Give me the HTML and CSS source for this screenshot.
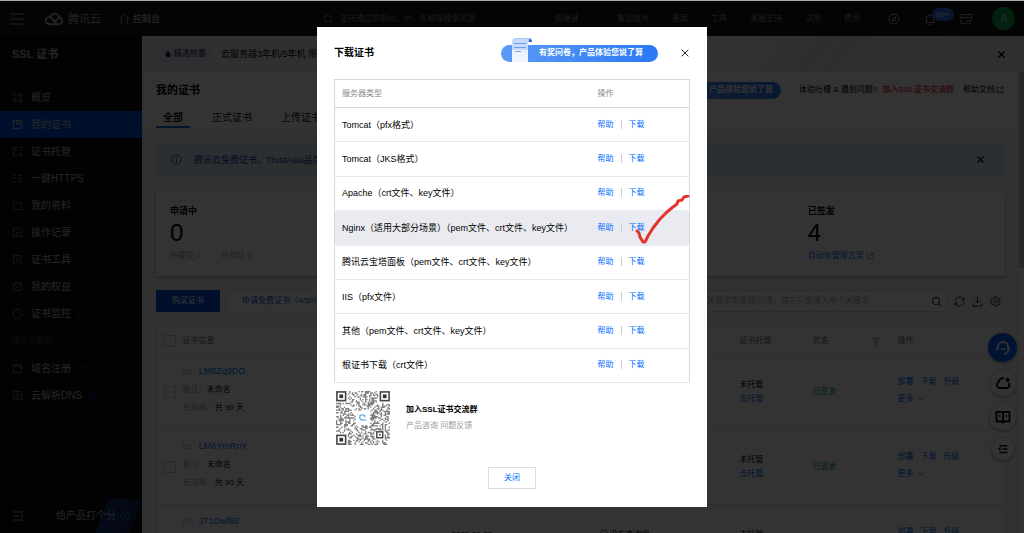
FILE: index.html
```html
<!DOCTYPE html>
<html lang="zh-CN">
<head>
    <meta charset="UTF-8">
    <meta name="viewport" content="width=device-width, initial-scale=1.0">
    <title>SSL 证书 - 控制台</title>
    <link rel="stylesheet" href="styles.css">
</head>
<body>
    <svg class="sprite" aria-hidden="true">
        <symbol id="i-ext" viewBox="0 0 12 12"><path d="M5 2H2v8h8V7M7 1.500h3.500V5M10.500 1.500 5.500 6.500"/></symbol>
        <symbol id="i-search" viewBox="0 0 12 12"><circle cx="5.500" cy="5.500" r="4"/><path d="m8.500 8.500 3 3"/></symbol>
        <symbol id="i-close" viewBox="0 0 12 12"><path d="m2 2 8 8M10 2l-8 8"/></symbol>
        <symbol id="i-down" viewBox="0 0 12 12"><path d="m2 4 4 4 4-4"/></symbol>
        <symbol id="i-info" viewBox="0 0 12 12"><circle cx="6" cy="6" r="5"/><path d="M6 5.500V9M6 3v1.200"/></symbol>
    </svg>

    <header class="topbar">
        <button class="icon-btn menu-btn" aria-label="菜单"><svg viewBox="0 0 14 12"><path d="M0 1h14M0 6h14M0 11h14"/></svg></button>
        <a class="logo" href="#">
            <svg viewBox="0 0 20 14"><path d="M5 12.500a3.800 3.800 0 1 1 1-7.300l7 7.300zM5.500 5.200a5 5 0 0 1 9.700.2 3.700 3.700 0 0 1 .3 7.100H9M9 10.500l4.500-4a3 3 0 0 1 2-1"/></svg>
            <span>腾讯云</span>
        </a>
        <a class="home" href="#">
            <svg viewBox="0 0 12 12"><path d="M1 6 6 1.500 11 6M2.500 5v6h2M9.500 5v6h-2"/></svg>
            <span>控制台</span>
        </a>
        <div class="top-search">
            <svg class="ico"><use href="#i-search"/></svg>
            <input type="text" aria-label="搜索资源" placeholder="支持通过实例ID、IP、名称等搜索资源">
            <span>快捷键 /</span>
        </div>
        <nav class="top-nav">
            <a href="#">集团账号</a>
            <a href="#">备案</a>
            <a href="#">工具</a>
            <a href="#">客服支持</a>
            <a href="#">试用</a>
            <a href="#">费用</a>
        </nav>
        <div class="top-tools">
            <button class="icon-btn" aria-label="导航"><svg viewBox="0 0 12 12"><circle cx="6" cy="6" r="5"/><path d="m4 8 1-3 3-1-1 3z"/></svg></button>
            <button class="icon-btn bell" aria-label="消息"><svg viewBox="0 0 12 12"><path d="M1.500 9.500h9M2.500 9.500V5.500a3.500 3.500 0 0 1 7 0v4M5 11.500h2"/></svg><span class="badge">99+</span></button>
            <button class="icon-btn" aria-label="工单"><svg viewBox="0 0 12 12"><path d="M6 10.500H1v-9h10.500V6M1 4.500h10.500"/><circle cx="9" cy="9" r="2"/></svg></button>
            <button class="avatar">A</button>
        </div>
    </header>

    <div class="layout">
        <aside class="sidebar">
            <h1>SSL 证书</h1>
            <nav class="side-nav">
                <a href="#"><svg viewBox="0 0 12 12"><path d="M1.500 1.500h3v3h-3zM7.500 1.500h3v3h-3zM1.500 7.500h3v3h-3zM7.500 7.500h3v3h-3z"/></svg>概览</a>
                <a href="#" class="active"><svg viewBox="0 0 12 12"><path d="M1.500 1.500h9v9h-9zM5 1.500V6l1.500-1L8 6V1.500"/></svg>我的证书</a>
                <a href="#"><svg viewBox="0 0 12 12"><path d="M5.500 10.500h-4v-9h9v4M4 1.500V5l1.500-1M8 8h3v3H8z"/></svg>证书托管</a>
                <a href="#"><svg viewBox="0 0 12 12"><path d="M1 2.500h3M6 2.500h5M1 6h3M6 6h5M1 9.500h3M6 9.500h5"/></svg>一键HTTPS<svg class="arrow"><use href="#i-down"/></svg></a>
                <a href="#"><svg viewBox="0 0 12 12"><path d="M1.500 10.500v-8H5l1 1h4.500v7z"/></svg>我的资料</a>
                <a href="#"><svg viewBox="0 0 12 12"><path d="M1.500 10.500v-9H8l2.500 2.500v6.500zM4 6h4M4 8h4"/></svg>操作记录</a>
                <a href="#"><svg viewBox="0 0 12 12"><path d="M5 10.500H1.500v-9h9v4M4 4h2"/><circle cx="7.500" cy="7.500" r="2"/><path d="m9 9 2 2"/></svg>证书工具</a>
                <a href="#"><svg viewBox="0 0 12 12"><path d="M1.500 3h9v7.500h-9zM4 1v2M8 1v2M4 6.500h4"/></svg>我的权益</a>
                <a href="#"><svg viewBox="0 0 12 12"><path d="M8.500 1.800A5 5 0 1 0 11 6M6 6.500l4-4"/></svg>证书监控<svg class="ext"><use href="#i-ext"/></svg></a>
                <p>域名与解析</p>
                <a href="#"><svg viewBox="0 0 12 12"><path d="M1.500 2h9v8.500h-9zM1.500 3.500h9"/></svg>域名注册<svg class="ext"><use href="#i-ext"/></svg></a>
                <a href="#"><svg viewBox="0 0 12 12"><path d="M1.500 1.500h9v9h-9zM4 4h4M4 6h4M4 8h4"/></svg>云解析DNS<svg class="ext"><use href="#i-ext"/></svg></a>
            </nav>
            <div class="side-foot">
                <button class="icon-btn" aria-label="收起"><svg viewBox="0 0 12 12"><path d="M1 2h10M1 6h6M1 10h10M9 4.500 11 6 9 7.500"/></svg></button>
                <a href="#">给产品打个分<svg class="ico"><use href="#i-info"/></svg></a>
            </div>
        </aside>

        <main class="main">
            <div class="promo">
                <span class="promo-tag"><svg viewBox="0 0 8 8"><path d="M4 0c.5 2 3 3 3 5a3 3 0 0 1-6 0c0-1.500 2.500-3 3-5z"/></svg>精选特惠</span>
                <a href="#">云服务器3年机/5年机 限</a>
                <svg class="promo-art" viewBox="0 0 170 36"><path d="M0 36 14 20l6 16zM30 36 60 0h24L54 36zM56 36 84 0h26L74 36z"/></svg>
                <button class="icon-btn" aria-label="关闭"><svg class="ico"><use href="#i-close"/></svg></button>
            </div>
            <div class="body-row">
                <div class="page">
                    <div class="page-head">
                        <div class="title-row">
                            <h2>我的证书</h2>
                            <a class="survey survey-small" href="#">有奖问卷，产品体验您说了算</a>
                            <span>体验吐槽 &amp; 遇到问题? <a class="red" href="#">加入SSL证书交流群</a></span>
                            <a class="doc" href="#">帮助文档<svg class="ico"><use href="#i-ext"/></svg></a>
                        </div>
                        <nav class="tabs">
                            <a href="#" class="on">全部</a>
                            <a href="#">正式证书</a>
                            <a href="#">上传证书</a>
                        </nav>
                    </div>
                    <div class="content">
                        <div class="alert">
                            <svg class="ico"><use href="#i-info"/></svg>
                            <span>腾讯云免费证书，TrustAsia品牌</span>
                            <button class="icon-btn" aria-label="关闭"><svg class="ico"><use href="#i-close"/></svg></button>
                        </div>
                        <div class="stats">
                            <div>
                                <h3>申请中</h3>
                                <strong>0</strong>
                                <p><span>待提交 0</span><span>待验证 0</span></p>
                            </div>
                            <div></div>
                            <div></div>
                            <div class="last">
                                <h3>已签发</h3>
                                <strong>4</strong>
                                <p><a href="#">自动化管理方案<svg class="ico"><use href="#i-ext"/></svg></a></p>
                            </div>
                        </div>
                        <div class="toolbar">
                            <button class="btn-primary">购买证书</button>
                            <button class="btn-plain">申请免费证书（4/50）</button>
                            <label class="filter">
                                <input type="text" aria-label="筛选证书" placeholder="支持域名ID搜索，多个关键字用竖线|分隔，其它只能输入单个关键字">
                                <svg class="ico"><use href="#i-search"/></svg>
                            </label>
                            <button class="icon-btn" aria-label="刷新"><svg viewBox="0 0 12 12"><path d="M1 5.500A5 5 0 0 1 10.500 4M11 1.500V4.500H8M11 6.500A5 5 0 0 1 1.500 8M1 10.500V7.500h3"/></svg></button>
                            <button class="icon-btn" aria-label="下载"><svg viewBox="0 0 12 12"><path d="M6 1v6.500M3.500 5 6 7.500 8.500 5M1 8v3h10V8"/></svg></button>
                            <button class="icon-btn" aria-label="设置"><svg viewBox="0 0 12 12"><path d="M4.500 2.500 5 .8h2l.5 1.700 1 .6 1.700-.4 1 1.700L10 5.500v1l1.200 1.200-1 1.700-1.700-.4-1 .6L7 11.200H5l-.5-1.600-1-.6-1.700.4-1-1.700L2 6.500v-1L.8 4.300l1-1.700 1.700.4z"/><circle cx="6" cy="6" r="1.700"/></svg></button>
                        </div>
                        <table class="certs">
                            <thead>
                                <tr>
                                    <th class="c-check"><input type="checkbox" aria-label="全选"></th>
                                    <th class="c-info">证书信息</th>
                                    <th class="c-date"></th>
                                    <th class="c-res"></th>
                                    <th class="c-host">证书托管</th>
                                    <th class="c-state"><span>状态<svg viewBox="0 0 12 12"><path d="M1 1.500h10L7.500 6v5h-3V6z"/></svg></span></th>
                                    <th class="c-op">操作</th>
                                </tr>
                            </thead>
                            <tbody>
                                <tr>
                                    <td><input type="checkbox" aria-label="LM6Zq9DO"></td>
                                    <td class="info"><p><i>ID:</i><a href="#">LM6Zq9DO</a></p><p><i>备注:</i>未命名</p><p><i>有效期:</i>共 90 天</p></td>
                                    <td></td>
                                    <td></td>
                                    <td>未托管<br><a href="#">去托管</a></td>
                                    <td class="ok">已签发</td>
                                    <td class="ops"><a href="#">部署</a><a href="#">下载</a><a href="#">升级</a><br><a href="#">更多<svg class="ico"><use href="#i-down"/></svg></a></td>
                                </tr>
                                <tr>
                                    <td><input type="checkbox" aria-label="LM6YmRnY"></td>
                                    <td class="info"><p><i>ID:</i><a href="#">LM6YmRnY</a></p><p><i>备注:</i>未命名</p><p><i>有效期:</i>共 90 天</p></td>
                                    <td></td>
                                    <td></td>
                                    <td>未托管<br><a href="#">去托管</a></td>
                                    <td class="ok">已签发</td>
                                    <td class="ops"><a href="#">部署</a><a href="#">下载</a><a href="#">升级</a><br><a href="#">更多<svg class="ico"><use href="#i-down"/></svg></a></td>
                                </tr>
                                <tr>
                                    <td><input type="checkbox" aria-label="J71Owf86"></td>
                                    <td class="info"><p><i>ID:</i><a href="#">J71Owf86</a></p><p><i>备注:</i>未命名</p><p><i>有效期:</i>共 90 天</p></td>
                                    <td>2025-01-25<br>&nbsp;</td>
                                    <td><svg class="ico"><use href="#i-info"/></svg> 没有查询呢<br>&nbsp;</td>
                                    <td>未托管<br><a href="#">去托管</a></td>
                                    <td class="ok">已签发</td>
                                    <td class="ops"><a href="#">部署</a><a href="#">下载</a><a href="#">升级</a><br><a href="#">更多<svg class="ico"><use href="#i-down"/></svg></a></td>
                                </tr>
                            </tbody>
                        </table>
                    </div>
                </div>
                <div class="scrollbar"></div>
            </div>
        </main>
    </div>

    <div class="floats">
        <button class="f-blue" aria-label="客服"><svg viewBox="0 0 16 16"><path d="M3 9V7a5 5 0 0 1 10 0v3a4 4 0 0 1-4 4M2 7.500v3M14 7.500v3M6 8.500a2.500 2.500 0 0 0 4 0"/></svg></button>
        <button class="f-mid" aria-label="云助手"><svg viewBox="0 0 16 16"><path d="M9 3.500a4.300 4.300 0 0 0-5.500 3.600A3.200 3.200 0 0 0 4.500 13H11a3 3 0 0 0 2.500-5"/><circle class="dot" cx="12.500" cy="5" r="1"/></svg></button>
        <button class="f-mid" aria-label="文档"><svg viewBox="0 0 16 16"><path d="M1.500 3H7l1 1 1-1h5.500v9.500H9l-1 1-1-1H1.500zM8 4v9M4 7h1.500M10.500 7H12"/></svg></button>
        <button class="f-small" aria-label="收起"><svg viewBox="0 0 16 16"><path d="M3 3.500h11M7 8h7M3 12.500h11M5 6 2.500 8 5 10"/></svg></button>
    </div>

    <div class="mask">
        <section class="dialog" role="dialog" aria-labelledby="dialog-title">
            <header class="dialog-head">
                <h2 id="dialog-title">下载证书</h2>
                <a class="survey" href="#">
                    <svg viewBox="0 0 24 24">
                        <g stroke="none">
                            <path fill="#a9c9fb" d="M3 0h16q2 0 2 4H3z"/>
                            <path fill="#c3dafc" d="M1 2q0-1 2-1h15q-1 0-1 3v9H1z"/>
                            <path fill="#edf4ff" d="M1 12h16v12H1z"/>
                            <path fill="#3565b8" d="M18 1q3 0 3 3h-3z"/>
                        </g>
                        <path stroke="#6ea1f2" d="M3 5.500h12M3 9.500h12M4 13.500h6"/>
                    </svg>
                    有奖问卷，产品体验您说了算
                </a>
                <button class="icon-btn" aria-label="关闭"><svg class="ico"><use href="#i-close"/></svg></button>
            </header>
            <table class="servers">
                <thead>
                    <tr><th>服务器类型</th><th class="act">操作</th></tr>
                </thead>
                <tbody>
                    <tr><td class="name">Tomcat（pfx格式）</td><td><a href="#">帮助</a><a href="#">下载</a></td></tr>
                    <tr><td class="name">Tomcat（JKS格式）</td><td><a href="#">帮助</a><a href="#">下载</a></td></tr>
                    <tr><td class="name">Apache（crt文件、key文件）</td><td><a href="#">帮助</a><a href="#">下载</a></td></tr>
                    <tr class="hover"><td class="name">Nginx（适用大部分场景）（pem文件、crt文件、key文件）</td><td><a href="#">帮助</a><a href="#">下载</a></td></tr>
                    <tr><td class="name">腾讯云宝塔面板（pem文件、crt文件、key文件）</td><td><a href="#">帮助</a><a href="#">下载</a></td></tr>
                    <tr><td class="name">IIS（pfx文件）</td><td><a href="#">帮助</a><a href="#">下载</a></td></tr>
                    <tr><td class="name">其他（pem文件、crt文件、key文件）</td><td><a href="#">帮助</a><a href="#">下载</a></td></tr>
                    <tr><td class="name">根证书下载（crt文件）</td><td><a href="#">帮助</a><a href="#">下载</a></td></tr>
                </tbody>
            </table>
            <div class="group">
                <svg id="qr" viewBox="0 0 41 41" role="img" aria-label="交流群二维码"></svg>
                <div>
                    <h3>加入SSL证书交流群</h3>
                    <p>产品咨询 问题反馈</p>
                </div>
            </div>
            <button class="close-btn">关闭</button>
            <svg class="tick" viewBox="0 0 56 50"><path d="M3 36l2 2 1 4 3 5 2 0 3-6 5-8 7-9 7-7 6-5 4-3 1-3 4-1 2-3 4-1"/></svg>
        </section>
    </div>
    <script src="qr.js"></script>
</body>
</html>
```
FILE: styles.css
```css
* {
    box-sizing: border-box;
}
body {
    margin: 0;
    height: 100vh;
    display: flex;
    flex-direction: column;
    overflow: hidden;
    border-top: 1px solid #a9aba9;
    font: 8px/12px "Liberation Sans", "Noto Sans CJK SC", sans-serif;
    color: #000;
    background: #fff;
}
h1, h2, h3, p {
    margin: 0;
}
a {
    color: #006eff;
    text-decoration: none;
}
input, button {
    font: inherit;
}
svg {
    fill: none;
    stroke: currentColor;
    flex: none;
}
.sprite {
    position: absolute;
    width: 0;
    height: 0;
}
.ico {
    width: 8px;
    height: 8px;
}
.icon-btn {
    display: flex;
    padding: 0;
    border: 0;
    background: none;
    color: inherit;
}
.icon-btn svg {
    width: 12px;
    height: 12px;
}

/* top bar */
.topbar {
    display: flex;
    align-items: center;
    flex: none;
    height: 35px;
    padding: 0 9px 0 10px;
    background: #141414;
    color: #aaa;
}
.topbar a {
    color: inherit;
}
.menu-btn svg {
    width: 14px;
}
.logo {
    display: flex;
    align-items: center;
    gap: 4px;
    margin-left: 21px;
    font-size: 11px;
}
.logo svg {
    width: 19px;
    height: 14px;
    stroke-width: 2;
}
.home {
    display: flex;
    align-items: center;
    gap: 3px;
    margin-left: 18px;
    font-size: 9px;
    font-weight: bold;
}
.home svg {
    width: 11px;
    height: 11px;
}
.top-search {
    display: flex;
    align-items: center;
    flex: 1;
    gap: 7px;
    margin-left: 163px;
    color: #888;
}
.top-search .ico {
    width: 10px;
    height: 10px;
}
.top-search input {
    flex: 1;
    min-width: 0;
    padding: 0;
    border: 0;
    background: none;
}
.top-search input::placeholder {
    color: #888;
}
.top-nav {
    display: flex;
    gap: 23px;
    margin-left: 34px;
    color: #888;
}
.top-tools {
    display: flex;
    align-items: center;
    gap: 24px;
    margin-left: 28px;
}
.bell {
    position: relative;
}
.badge {
    position: absolute;
    left: 8px;
    top: -5px;
    padding: 0 4px;
    border-radius: 7px;
    background: #2468e8;
    color: #eee;
    line-height: 13px;
}
.avatar {
    width: 23px;
    height: 23px;
    margin-left: -4px;
    padding: 0;
    border: 0;
    border-radius: 50%;
    background: #0fa445;
    color: #ddd;
    font-size: 10px;
}

/* sidebar */
.layout {
    display: flex;
    flex: 1;
    min-height: 0;
}
.sidebar {
    display: flex;
    flex-direction: column;
    flex: none;
    width: 142px;
    background: #0a0a0a;
    color: #bbb;
}
.sidebar h1 {
    padding: 0 12px;
    border-bottom: 1px solid #1a1a1a;
    font-size: 11px;
    line-height: 36px;
}
.side-nav {
    flex: 1;
    padding-top: 11px;
    font-size: 10px;
}
.side-nav a {
    display: flex;
    align-items: center;
    height: 27px;
    padding: 0 12px;
    color: inherit;
}
.side-nav svg {
    width: 11px;
    height: 11px;
    margin-right: 8px;
    color: #777;
}
.side-nav .active {
    background: #0052d9;
}
.side-nav .active svg {
    color: #ccc;
}
.side-nav .ext {
    width: 8px;
    height: 8px;
    margin: 0 0 0 6px;
    color: #0052d9;
}
.side-nav .arrow {
    width: 8px;
    height: 8px;
    margin: 0 0 0 auto;
}
.side-nav p {
    padding: 0 12px;
    color: #555;
    font-size: 8px;
    line-height: 28px;
}
.side-foot {
    display: flex;
    align-items: center;
    justify-content: space-between;
    height: 34px;
    padding: 0 12px;
    background: linear-gradient(110deg, transparent 70%, #18387c 70%, #0e2350 92%, transparent 92%);
    font-size: 10px;
}
.side-foot a {
    display: flex;
    align-items: center;
    gap: 4px;
    color: inherit;
}
.side-foot .ico {
    width: 10px;
    height: 10px;
    color: #4f86e8;
}

/* page */
.main {
    display: flex;
    flex-direction: column;
    flex: 1;
    min-width: 0;
}
.promo {
    display: flex;
    align-items: center;
    gap: 9px;
    flex: none;
    height: 36px;
    padding: 0 18px 0 17px;
    background: linear-gradient(90deg, #ebeff8, #f3f4f7 60%, #e6ebf4);
    font-size: 9px;
}
.promo a {
    flex: 1;
    color: inherit;
}
.promo-tag {
    display: flex;
    align-items: center;
    gap: 3px;
    height: 15px;
    padding: 0 6px;
    background: #dfe5f5;
    color: #223;
    font-size: 8px;
}
.promo-tag svg {
    width: 6px;
    height: 6px;
    fill: currentColor;
}
.promo-art {
    width: 170px;
    height: 36px;
    margin-right: 60px;
    fill: #e2e4ea;
    stroke: none;
}
.promo .icon-btn .ico, .alert .icon-btn .ico {
    width: 9px;
    height: 9px;
    stroke-width: 2;
}
.body-row {
    display: flex;
    flex: 1;
    min-height: 0;
}
.page {
    flex: 1;
    min-width: 0;
    overflow: hidden;
    background: #f5f5f5;
}
.scrollbar {
    width: 5px;
    height: 196px;
    background: #c1c1c1;
}
.page-head {
    padding: 6px 15px 0 14px;
    background: #fff;
}
.title-row {
    display: flex;
    align-items: center;
    gap: 9px;
    height: 24px;
}
.title-row h2 {
    margin-right: auto;
    font-size: 11px;
}
.red {
    margin-left: 3px;
    color: #e54545;
    font-weight: bold;
}
.doc {
    display: flex;
    align-items: center;
    gap: 1px;
    color: #000;
}
.survey {
    display: flex;
    align-items: center;
    height: 17px;
    padding: 0 8px 0 10px;
    border-radius: 9px;
    background: linear-gradient(90deg, #5b9bf5, #2a78f6);
    color: #fff;
    font-weight: bold;
}
.survey svg {
    width: 24px;
    height: 24px;
    margin: -7px 4px 0 0;
}
.survey-small {
    margin-right: 9px;
}
.tabs {
    display: flex;
    gap: 15px;
    font-size: 10px;
}
.tabs a {
    padding: 9px 7px 1px;
    border-bottom: 2px solid transparent;
    color: #111;
    line-height: 14px;
}
.tabs .on {
    border-color: #0074d9;
    font-weight: bold;
}
.content {
    padding: 15px 14px 0;
}
.alert {
    display: flex;
    align-items: center;
    gap: 12px;
    height: 33px;
    padding: 0 20px 0 15px;
    background: #dde8f8;
    color: #113b96;
    font-size: 9px;
}
.alert > .ico {
    width: 11px;
    height: 11px;
}
.alert .icon-btn {
    margin-left: auto;
    color: #222;
}
.stats {
    display: grid;
    grid-template-columns: repeat(4, 1fr);
    margin: 14px 0;
    padding: 12px 0;
    background: #fff;
    box-shadow: 0 1px 3px rgba(0, 0, 0, .35);
}
.stats > div {
    height: 62px;
    padding: 3px 14px 0;
}
.stats .last {
    border-left: 1px solid #eee;
}
.stats h3 {
    font-size: 9px;
    line-height: 12px;
}
.stats strong {
    display: block;
    font-size: 24px;
    font-weight: normal;
    line-height: 32px;
}
.stats p {
    display: flex;
    gap: 20px;
    color: #999;
    line-height: 14px;
}
.stats a {
    display: flex;
    align-items: center;
    gap: 2px;
}
.toolbar {
    display: flex;
    align-items: center;
    gap: 7px;
    margin-bottom: 14px;
    padding-right: 4px;
}
.toolbar button {
    color: #222;
}
.toolbar .icon-btn svg {
    width: 11px;
    height: 11px;
}
.toolbar .btn-primary, .toolbar .btn-plain {
    height: 22px;
    padding: 0 16px;
    border: 0;
    background: #0052d9;
    color: #fff;
}
.toolbar .btn-plain {
    padding: 0 14px;
    border: 1px solid #eee;
    background: #fff;
    color: #0a62e0;
}
.filter {
    display: flex;
    align-items: center;
    width: 328px;
    height: 22px;
    margin-left: auto;
    padding: 0 4px 0 7px;
    border: 1px solid #ddd;
    background: #fff;
}
.filter input {
    flex: 1;
    min-width: 0;
    padding: 0;
    border: 0;
    background: none;
}
.filter input::placeholder {
    color: #aaa;
}
.filter .ico {
    width: 11px;
    height: 11px;
}
.certs {
    width: 100%;
    table-layout: fixed;
    border-collapse: collapse;
    border: 1px solid #e5e5e5;
    background: #fff;
}
.certs th, .certs td {
    padding: 0;
    border-bottom: 1px solid #e5e5e5;
    text-align: left;
    font-weight: normal;
}
.certs th {
    height: 28px;
    color: #666;
}
.certs td {
    height: 75px;
    line-height: 14px;
}
.certs input {
    appearance: none;
    display: block;
    width: 12px;
    height: 12px;
    margin: 0 0 0 7px;
    border: 1px solid #ccc;
}
.c-check { width: 26px; }
.c-date { width: 148px; }
.c-res { width: 140px; }
.c-host { width: 73px; }
.c-state { width: 85px; }
.c-op { width: 107px; }
.c-state span {
    display: flex;
    justify-content: space-between;
    align-items: center;
    padding-right: 18px;
}
.c-state svg {
    width: 8px;
    height: 8px;
}
.certs .info {
    padding-bottom: 6px;
}
.certs .info p {
    line-height: 18px;
}
.info i {
    margin-right: 6px;
    color: #aaa;
    font-style: normal;
}
.info a {
    font-size: 9px;
}
.certs .ok {
    color: #0a9b50;
}
.certs .ops {
    padding-bottom: 4px;
    line-height: 17px;
}
.ops a {
    margin-right: 7px;
}
.ops .ico {
    margin-left: 3px;
    vertical-align: -2px;
}

/* floating buttons */
.floats {
    position: fixed;
    right: 7px;
    top: 333px;
    display: flex;
    flex-direction: column;
    align-items: center;
    gap: 8px;
}
.floats button {
    display: flex;
    align-items: center;
    justify-content: center;
    width: 26px;
    height: 26px;
    padding: 0;
    border: 0;
    border-radius: 50%;
    background: #fff;
    box-shadow: 0 1px 4px rgba(0, 0, 0, .4);
    color: #111;
}
.floats svg {
    width: 16px;
    height: 16px;
    stroke-width: 2;
}
.floats .dot {
    fill: currentColor;
}
.floats .f-blue {
    width: 29px;
    height: 29px;
    background: #0062ff;
    color: #eee;
}
.floats .f-small {
    width: 22px;
    height: 22px;
}
.floats .f-small svg {
    width: 12px;
    height: 12px;
}

/* download dialog */
.mask {
    position: fixed;
    inset: 1px 0 0;
    display: flex;
    align-items: center;
    justify-content: center;
    background: rgba(0, 0, 0, .8);
}
.dialog {
    position: relative;
    width: 390px;
    padding: 0 17px 18px;
    background: #fff;
}
.dialog-head {
    display: flex;
    align-items: center;
    height: 52px;
}
.dialog-head h2 {
    margin-right: auto;
    font-size: 10px;
}
.dialog-head .survey {
    width: 157px;
    margin-right: 22px;
}
.dialog-head .icon-btn .ico {
    width: 10px;
    height: 10px;
}
.servers {
    width: 100%;
    height: 304px;
    table-layout: fixed;
    border-collapse: collapse;
    border: 1px solid #d5d7da;
}
.servers th, .servers td {
    padding: 0 7px;
    border-bottom: 1px solid #e7e9ec;
    text-align: left;
    font-weight: normal;
}
.servers th {
    height: 28px;
    border-color: #d5d7da;
    color: #888;
}
.servers .name {
    font-size: 9px;
    white-space: nowrap;
}
.servers .act {
    width: 99px;
}
.servers .hover {
    background: #e9ebf1;
}
.servers a + a {
    margin-left: 7px;
    padding-left: 7px;
    border-left: 1px solid #ccc;
}
.group {
    display: flex;
    align-items: center;
    gap: 16px;
    padding: 8px 2px 0;
}
.group svg {
    width: 54px;
    height: 54px;
}
.group h3 {
    font-size: 8px;
}
.group p {
    margin-top: 4px;
    color: #999;
}
.close-btn {
    display: block;
    width: 48px;
    height: 22px;
    margin: 22px auto 0;
    padding: 0;
    border: 1px solid #ddd;
    background: #fff;
    color: #006eff;
}
.tick {
    position: absolute;
    right: 17px;
    top: 168px;
    width: 56px;
    height: 50px;
    color: #e3342b;
    stroke-width: 3;
    stroke-linecap: round;
    stroke-linejoin: round;
}
```
FILE: qr.js
```javascript
const size = 41;
const qr = document.getElementById("qr");
let seed = 7;
let cells = "";

function random() {
    seed = (seed * 1103515245 + 12345) % 2147483648;
    return seed / 2147483648;
}

// keep the three corners, the small marker and the centre logo free
function reserved(x, y) {
    const corner = (x < 9 && y < 9) || (x > 31 && y < 9) || (x < 9 && y > 31);
    const marker = x > 29 && x < 37 && y > 29 && y < 37;
    const logo = x > 14 && x < 26 && y > 14 && y < 26;
    return corner || marker || logo;
}

for (let y = 0; y < size; y++) {
    for (let x = 0; x < size; x++) {
        if (!reserved(x, y) && random() < 0.44) {
            cells += `M${x} ${y}h1v1h-1z`;
        }
    }
}

function finder(x, y) {
    return `<rect x="${x + 0.7}" y="${y + 0.7}" width="6.6" height="6.6" fill="none" stroke="#444" stroke-width="1.2"/>
        <rect x="${x + 2.6}" y="${y + 2.6}" width="2.8" height="2.8" fill="#333" stroke="none"/>`;
}

qr.innerHTML = `<path d="${cells}" fill="#808080" stroke="none"/>` +
    finder(0, 0) + finder(33, 0) + finder(0, 33) +
    `<rect x="31" y="31" width="4.500" height="4.500" stroke="#333"/><rect x="32.700" y="32.700" width="1.200" height="1.200" fill="#333" stroke="none"/>
    <path d="M20 22a2 2 0 1 1 2-2M20 22h3" stroke="#4aa3df" stroke-width="0.8"/>`;
```
